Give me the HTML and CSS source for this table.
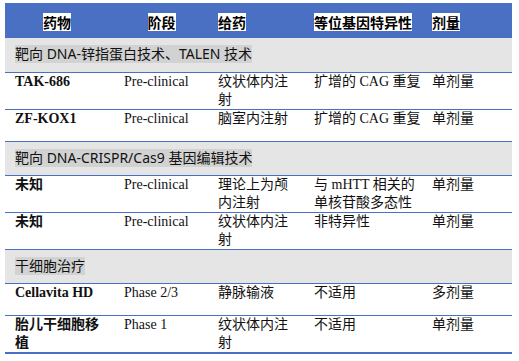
FILE: index.html
```html
<!DOCTYPE html>
<html lang="zh">
<head>
  <meta charset="UTF-8" />
  <title>药物管线</title>
  <link rel="stylesheet" href="styles.css">
</head>
<body>
  <table class="pipeline">
    <colgroup>
      <col class="c-drug">
      <col class="c-phase">
      <col class="c-route">
      <col class="c-allele">
      <col class="c-dose">
    </colgroup>
    <thead>
      <tr>
        <th class="center first"><span class="hl">药物</span></th>
        <th class="center"><span class="hl">阶段</span></th>
        <th><span class="hl">给药</span></th>
        <th><span class="hl">等位基因特异性</span></th>
        <th><span class="hl">剂量</span></th>
      </tr>
    </thead>
    <tbody>
      <tr class="section">
        <td colspan="5"><span class="hl">靶向 DNA-锌指蛋白技术、TALEN 技术</span></td>
      </tr>
      <tr>
        <td class="name">TAK-686</td>
        <td>Pre-clinical</td>
        <td>纹状体内注射</td>
        <td>扩增的 CAG 重复</td>
        <td>单剂量</td>
      </tr>
      <tr>
        <td class="name">ZF-KOX1</td>
        <td>Pre-clinical</td>
        <td>脑室内注射</td>
        <td>扩增的 CAG 重复</td>
        <td>单剂量</td>
      </tr>

      <tr class="section">
        <td colspan="5"><span class="hl">靶向 DNA-CRISPR/Cas9 基因编辑技术</span></td>
      </tr>
      <tr>
        <td class="name">未知</td>
        <td>Pre-clinical</td>
        <td>理论上为颅内注射</td>
        <td>与 mHTT 相关的单核苷酸多态性</td>
        <td>单剂量</td>
      </tr>
      <tr>
        <td class="name">未知</td>
        <td>Pre-clinical</td>
        <td>纹状体内注射</td>
        <td>非特异性</td>
        <td>单剂量</td>
      </tr>

      <tr class="section">
        <td colspan="5"><span class="hl">干细胞治疗</span></td>
      </tr>
      <tr>
        <td class="name">Cellavita HD</td>
        <td>Phase 2/3</td>
        <td>静脉输液</td>
        <td>不适用</td>
        <td>多剂量</td>
      </tr>
      <tr class="last">
        <td class="name">胎儿干细胞移植</td>
        <td>Phase 1</td>
        <td>纹状体内注射</td>
        <td>不适用</td>
        <td>单剂量</td>
      </tr>
    </tbody>
  </table>
</body>
</html>
```

FILE: styles.css
```css
body {
  margin: 0;
  padding: 3px 0 0 5px;
  font-family: "Liberation Serif", "Noto Sans CJK SC", serif;
  font-size: 14px;
  color: #111;
  background: #fff;
}
.pipeline {
  width: 507px;
  table-layout: fixed;
  border-collapse: collapse;
}
.c-drug { width: 114px; }
.c-phase { width: 94px; }
.c-route { width: 96px; }
.c-allele { width: 118px; }
.c-dose { width: 85px; }

th {
  background: #4a70c4;
  height: 33px;
  padding: 2px 12px 0 5px;
  text-align: left;
  font-family: "Noto Sans CJK SC", sans-serif;
  font-weight: bold;
  font-size: 14px;
  color: #000;
}
th.center { text-align: center; padding-right: 14px; }
th.first { padding-left: 8px; padding-right: 18px; }
th .hl {
  background: #fff;
  line-height: 18px;
  display: inline-block;
}

td {
  vertical-align: top;
  padding: 0 12px 0 5px;
  line-height: 18px;
  height: 32px;
  box-sizing: border-box;
}
td:first-child { padding-left: 10px; }
td:nth-child(4) { padding-right: 4px; }
td.name { font-weight: bold; }

tbody tr { border-top: 1px solid #4a70c4; }
tbody tr.section:first-child { border-top: none; }
tr.last { border-bottom: 2px solid #4a70c4; }

tr.section td {
  background: #e5e5e5;
  height: 34px;
  padding: 7px 10px 0 10px;
  font-family: "Noto Sans", "Noto Sans CJK SC", sans-serif;
  line-height: 18px;
}
tr.section .hl {
  background: #d2d2d2;
  display: inline-block;
}
```
